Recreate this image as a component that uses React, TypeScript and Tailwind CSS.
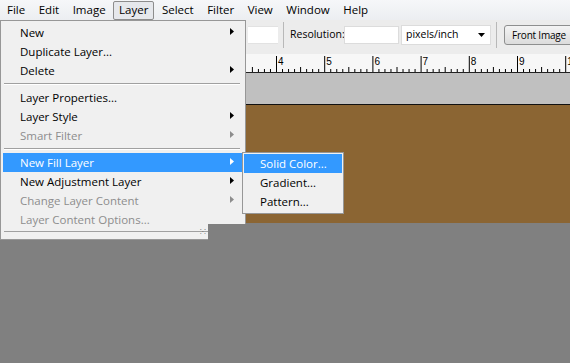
import React from 'react';

const FONT = { fontFamily: '"Open Sans", "Noto Sans", sans-serif' };

const menuBar = ['File', 'Edit', 'Image', 'Layer', 'Select', 'Filter', 'View', 'Window', 'Help'];

type Item = { label: string; sub?: boolean; disabled?: boolean; active?: boolean } | 'sep';

const items: Item[] = [
  { label: 'New', sub: true },
  { label: 'Duplicate Layer...' },
  { label: 'Delete', sub: true },
  'sep',
  { label: 'Layer Properties...' },
  { label: 'Layer Style', sub: true },
  { label: 'Smart Filter', sub: true, disabled: true },
  'sep',
  { label: 'New Fill Layer', sub: true, active: true },
  { label: 'New Adjustment Layer', sub: true },
  { label: 'Change Layer Content', sub: true, disabled: true },
  { label: 'Layer Content Options...', disabled: true },
];

function Arrow({ color }: { color: string }) {
  return (
    <svg width="4" height="7" viewBox="0 0 4 7" className="absolute right-[9px] top-[5px]">
      <polygon points="0,0 4,3.5 0,7" fill={color} />
    </svg>
  );
}

function Ruler() {
  const start = 246;
  const major = 276;
  const step = 48.2;
  const ticks: React.ReactNode[] = [];
  for (let i = -40; i < 60; i++) {
    const x = major + (step / 8) * i - start;
    if (x < 0 || x > 330) continue;
    const m = ((i % 8) + 8) % 8;
    const h = m === 0 ? 16 : m === 4 ? 5 : 3;
    ticks.push(<line key={i} x1={x + 0.5} x2={x + 0.5} y1={18 - h} y2={18} stroke="#000" strokeWidth="1" />);
  }
  const labels = ['4', '5', '6', '7', '8', '9', '1'];
  return (
    <svg width="324" height="19" className="block">
      <rect width="324" height="19" fill="#f7f7f7" />
      {ticks}
      {labels.map((l, i) => (
        <text key={i} x={major + step * i - start + 2} y="11" fontSize="10" fontFamily="Liberation Sans, sans-serif" fill="#000">{l}</text>
      ))}
      <line x1="0" x2="324" y1="18.5" y2="18.5" stroke="#222" />
    </svg>
  );
}

export default function App() {
  return (
    <div className="relative w-[570px] h-[363px] bg-[#808080] overflow-hidden text-[11.5px] text-black" style={FONT}>
      {/* menu bar */}
      <div className="h-[20px] flex items-center bg-gradient-to-b from-[#f6f7f9] to-[#eceef1] pl-[1px]">
        {menuBar.map((m) => (
          <span key={m}
            className={`h-[19px] flex items-center px-[5px] mr-[1.5px] ${m === 'Layer' ? 'border border-[#8d8d8d] rounded-[2px] bg-[#e6e8ec]' : 'border border-transparent'}`}>
            {m}
          </span>
        ))}
      </div>

      {/* options bar */}
      <div className="h-[30px] flex items-center bg-[#ececec] pl-[248px] text-[10.5px] whitespace-nowrap">
        <div className="shrink-0 w-[30px] h-[18px] bg-white border-y border-[#e2e2e2]" />
        <div className="shrink-0 w-px h-[26px] bg-[#b8b8b8] ml-[5px]" />
        <span className="shrink-0 ml-[6px] w-[54px]">Resolution:</span>
        <div className="shrink-0 w-[55px] h-[18px] bg-white border border-[#dcdcdc]" />
        <div className="shrink-0 w-[90px] h-[20px] bg-white border border-[#dcdcdc] flex items-center justify-between pl-[4px] pr-[5px] ml-[2px]">
          <span>pixels/inch</span>
          <svg width="7" height="4" viewBox="0 0 7 4"><polygon points="0,0 7,0 3.5,4" fill="#000" /></svg>
        </div>
        <div className="shrink-0 w-px h-[26px] bg-[#b8b8b8] ml-[5px]" />
        <div className="shrink-0 h-[20px] border border-[#8e8f8f] rounded-[3px] bg-gradient-to-b from-[#f4f4f4] to-[#dcdcdc] flex items-center pl-[7px] pr-[10px] ml-[7px] text-[10px] tracking-[-0.2px]">
          Front Image
        </div>
      </div>

      {/* workspace */}
      <div className="h-[173px] flex">
        <div className="w-[246px] bg-[#d4d4d4] border-r border-[#8a8a8a]" />
        <div className="flex-1 flex flex-col">
          <div className="h-[4px] bg-[#ececec]" />
          <Ruler />
          <div className="h-[32px] bg-[#c0c0c0] border-b border-[#111]" />
          <div className="flex-1 bg-[#8b6533]" />
        </div>
      </div>

      {/* Layer menu */}
      <div className="absolute left-0 top-[20px] w-[246px] h-[220px] bg-[#f0f0f0] border border-[#979797] pt-[2px] px-[2px]">
        {items.map((it, i) =>
          it === 'sep' ? (
            <div key={i} className="h-[8px] flex items-center pl-[1px] pr-[3px]">
              <div className="w-full h-[2px] border-t border-[#a0a0a0] border-b border-b-white" />
            </div>
          ) : (
            <div key={i}
              className={`relative h-[19px] flex items-center pl-[17px] ${it.active ? 'bg-[#3399ff] text-white' : it.disabled ? 'text-[#8d8d8d]' : ''}`}>
              {it.label}
              {it.sub && <Arrow color={it.active ? '#ffffff' : it.disabled ? '#8d8d8d' : '#000000'} />}
            </div>
          )
        )}
        <div className="relative mt-[2px] h-[3px] border-t border-[#a0a0a0] mx-[1px]">
          <span className="absolute left-[196px] top-[-4px] text-[7px] leading-none text-[#555]">⁙</span>
        </div>
      </div>

      {/* cut off area */}
      <div className="absolute left-[208px] top-[224px] w-[40px] h-[17px] bg-[#808080]" />

      {/* submenu */}
      <div className="absolute left-[242px] top-[152px] w-[102px] h-[62px] bg-[#f0f0f0] border border-[#979797] p-px">
        <div className="h-[19px] flex items-center pl-[16px] bg-[#3399ff] text-white">Solid Color...</div>
        <div className="h-[19px] flex items-center pl-[16px]">Gradient...</div>
        <div className="h-[19px] flex items-center pl-[16px]">Pattern...</div>
      </div>
    </div>
  );
}
